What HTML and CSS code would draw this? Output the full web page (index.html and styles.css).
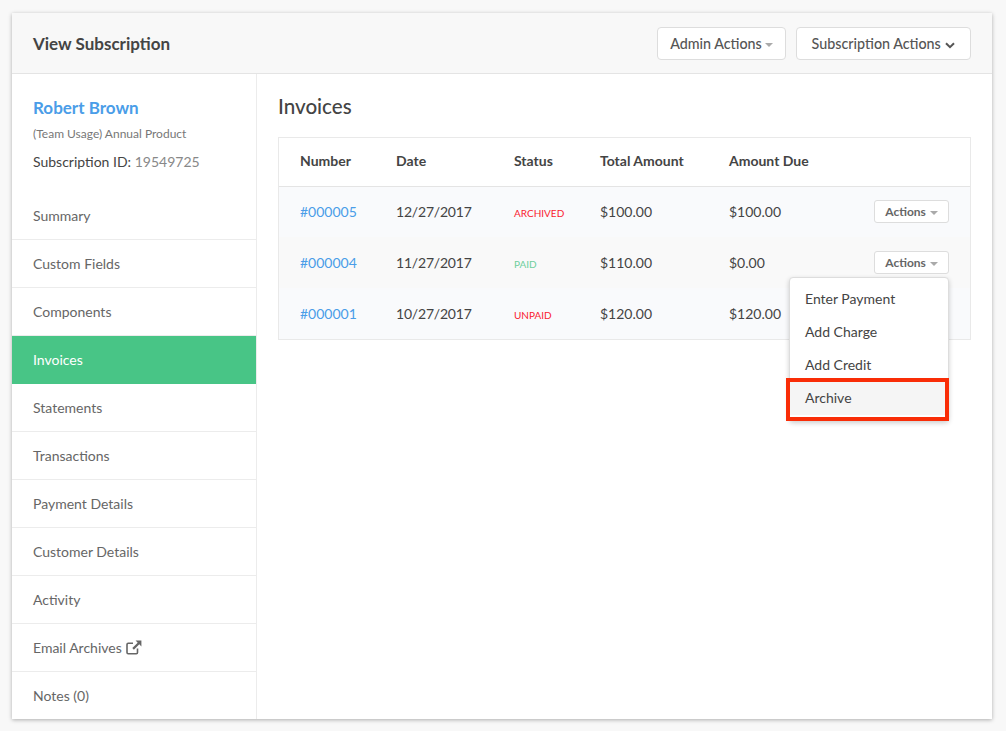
FILE: index.html
```html
<!DOCTYPE html>
<html lang="en">
<head>
    <meta charset="UTF-8" />
    <title>View Subscription</title>
    <link rel="stylesheet" href="styles.css">
</head>
<body>
    <div class="card">
        <div class="card-header">
            <h1>View Subscription</h1>
            <div class="header-actions">
                <button class="btn">Admin Actions<span class="caret"></span></button>
                <button class="btn btn-sub">Subscription Actions
                    <svg class="chevron" viewBox="0 0 10 7" width="10" height="7"><path d="M1 1.2 L5 5.2 L9 1.2" fill="none" stroke="#555" stroke-width="2"/></svg>
                </button>
            </div>
        </div>

        <div class="card-body">
            <div class="sidebar">
                <div class="customer">
                    <a class="customer-name">Robert Brown</a>
                    <div class="product">(Team Usage) Annual Product</div>
                    <div class="sub-id">Subscription ID: <span>19549725</span></div>
                </div>
                <ul class="nav">
                    <li>Summary</li>
                    <li>Custom Fields</li>
                    <li>Components</li>
                    <li class="active">Invoices</li>
                    <li>Statements</li>
                    <li>Transactions</li>
                    <li>Payment Details</li>
                    <li>Customer Details</li>
                    <li>Activity</li>
                    <li>Email Archives
                        <svg class="ext" viewBox="0 0 16 15" width="16" height="15">
                            <path d="M11.5 8.5 V12.5 A1.2 1.2 0 0 1 10.3 13.7 H2.2 A1.2 1.2 0 0 1 1 12.5 V4.4 A1.2 1.2 0 0 1 2.2 3.2 H7" fill="none" stroke="#666" stroke-width="1.6"/>
                            <path d="M9.6 0.6 H15.4 V6.4 L13.3 4.3 L7.9 9.7 L6.3 8.1 L11.7 2.7 Z" fill="#666"/>
                        </svg>
                    </li>
                    <li>Notes (0)</li>
                </ul>
            </div>

            <div class="content">
                <h2>Invoices</h2>
                <div class="table-wrap">
                    <table class="invoices">
                        <thead>
                            <tr>
                                <th class="col-number">Number</th>
                                <th class="col-date">Date</th>
                                <th class="col-status">Status</th>
                                <th class="col-total">Total Amount</th>
                                <th class="col-due">Amount Due</th>
                                <th></th>
                            </tr>
                        </thead>
                        <tbody>
                            <tr>
                                <td><a>#000005</a></td>
                                <td class="date">12/27/2017</td>
                                <td><span class="status red">ARCHIVED</span></td>
                                <td>$100.00</td>
                                <td>$100.00</td>
                                <td class="cell-action"><button class="btn-small">Actions <span class="caret"></span></button></td>
                            </tr>
                            <tr class="alt">
                                <td><a>#000004</a></td>
                                <td class="date">11/27/2017</td>
                                <td><span class="status green">PAID</span></td>
                                <td>$110.00</td>
                                <td>$0.00</td>
                                <td class="cell-action"><button class="btn-small">Actions <span class="caret"></span></button></td>
                            </tr>
                            <tr>
                                <td><a>#000001</a></td>
                                <td class="date">10/27/2017</td>
                                <td><span class="status red">UNPAID</span></td>
                                <td>$120.00</td>
                                <td>$120.00</td>
                                <td class="cell-action"><button class="btn-small">Actions <span class="caret"></span></button></td>
                            </tr>
                        </tbody>
                    </table>

                    <ul class="dropdown">
                        <li>Enter Payment</li>
                        <li>Add Charge</li>
                        <li>Add Credit</li>
                        <li class="hover">Archive</li>
                    </ul>
                </div>
            </div>
        </div>
    </div>
</body>
</html>
```

FILE: styles.css
```css
* {
    box-sizing: border-box;
}
body {
    margin: 0;
    height: 731px;
    padding: 13px 14px 0 12px;
    overflow: hidden;
    font-family: Lato, Arial, sans-serif;
    font-size: 14px;
    color: #444;
    background-color: #f8f8f8;
}
.card {
    height: 706px;
    background: #fff;
    box-shadow: 0 1px 4px rgba(0, 0, 0, 0.3);
}
.card-header {
    display: flex;
    justify-content: space-between;
    align-items: center;
    height: 61px;
    padding: 0 21px;
    background: #f8f8f8;
    border-bottom: 1px solid #e4e4e4;
}
h1 {
    margin: 0;
    font-size: 17px;
    font-weight: 700;
    color: #444;
}
.header-actions {
    display: flex;
    gap: 10px;
}
.btn {
    height: 33px;
    width: 129px;
    padding: 0;
    font-family: inherit;
    font-size: 14.3px;
    font-weight: 500;
    color: #555;
    background: #fff;
    border: 1px solid #ddd;
    border-radius: 4px;
}
.btn .caret {
    margin-left: 3px;
}
.btn-sub {
    width: 175px;
}
.chevron {
    margin-left: 1px;
}
.caret {
    display: inline-block;
    vertical-align: middle;
    margin-left: 1px;
    border-top: 4px solid #aaa;
    border-left: 4px solid transparent;
    border-right: 4px solid transparent;
}
.card-body {
    display: flex;
    height: 645px;
}
.sidebar {
    width: 245px;
    flex-shrink: 0;
    border-right: 1px solid #ececec;
}
.customer {
    height: 118px;
    padding: 24px 21px 0;
}
.customer-name {
    display: block;
    font-size: 17px;
    font-weight: 700;
    line-height: 20px;
    color: #4a9de8;
}
.product {
    margin-top: 8px;
    font-size: 12px;
    line-height: 15px;
    color: #777;
}
.sub-id {
    margin-top: 12px;
    font-size: 14px;
    line-height: 18px;
    color: #444;
}
.sub-id span {
    color: #888;
}
.nav {
    margin: 0;
    padding: 0;
    list-style: none;
}
.nav li {
    display: flex;
    align-items: center;
    gap: 4px;
    height: 48px;
    padding: 0 21px;
    color: #666;
    border-bottom: 1px solid #ececec;
}
.nav li:last-child {
    border-bottom-color: transparent;
}
.nav li.active {
    color: #fff;
    background: #48c586;
    border-bottom-color: #48c586;
}
.content {
    flex: 1;
    padding: 20px 21px 0;
}
h2 {
    margin: 0 0 19px;
    font-size: 20.6px;
    line-height: 24px;
    font-weight: 500;
    color: #444;
}
.table-wrap {
    position: relative;
    border: 1px solid #e9e9e9;
}
.invoices {
    width: 100%;
    border-collapse: collapse;
    table-layout: fixed;
}
.invoices th {
    height: 48px;
    padding: 0 0 2px;
    font-weight: 700;
    text-align: left;
    color: #444;
    border-bottom: 1px solid #e4e4e4;
}
.invoices td {
    height: 51px;
    padding: 0;
    background: #f9fafc;
}
.invoices tr.alt td {
    background: #f9f9f9;
}
.invoices th:first-child,
.invoices td:first-child {
    padding-left: 21px;
}
.col-number {
    width: 117px;
}
.col-date {
    width: 118px;
}
.col-status {
    width: 86px;
}
.col-total {
    width: 129px;
}
.col-due {
    width: 129px;
}
.invoices a {
    color: #4a9de8;
}
.date {
    letter-spacing: -0.2px;
}
.status {
    font-size: 10px;
}
.red {
    color: #fa1a30;
}
.green {
    color: #6fcf9d;
}
.cell-action {
    padding-right: 21px !important;
    text-align: right;
}
.btn-small {
    width: 75px;
    height: 23px;
    padding: 0;
    font-family: inherit;
    font-size: 12px;
    font-weight: 700;
    color: #666;
    background: #fff;
    border: 1px solid #ddd;
    border-radius: 3px;
}
.dropdown {
    position: absolute;
    top: 139px;
    right: 21px;
    width: 160px;
    margin: 0;
    padding: 4px 0 5px;
    list-style: none;
    background: #fff;
    border: 1px solid #ddd;
    border-radius: 4px;
    box-shadow: 0 2px 5px rgba(0, 0, 0, 0.2);
}
.dropdown li {
    height: 33px;
    padding-left: 15px;
    line-height: 33px;
    color: #444;
}
.dropdown li.hover {
    position: relative;
    height: 34px;
    background: #f5f5f5;
}
/* red highlight drawn over the menu item */
.dropdown li.hover::after {
    content: "";
    position: absolute;
    top: -3px;
    bottom: -6px;
    left: -4px;
    right: -1px;
    border: 4px solid #f92d07;
}
```
